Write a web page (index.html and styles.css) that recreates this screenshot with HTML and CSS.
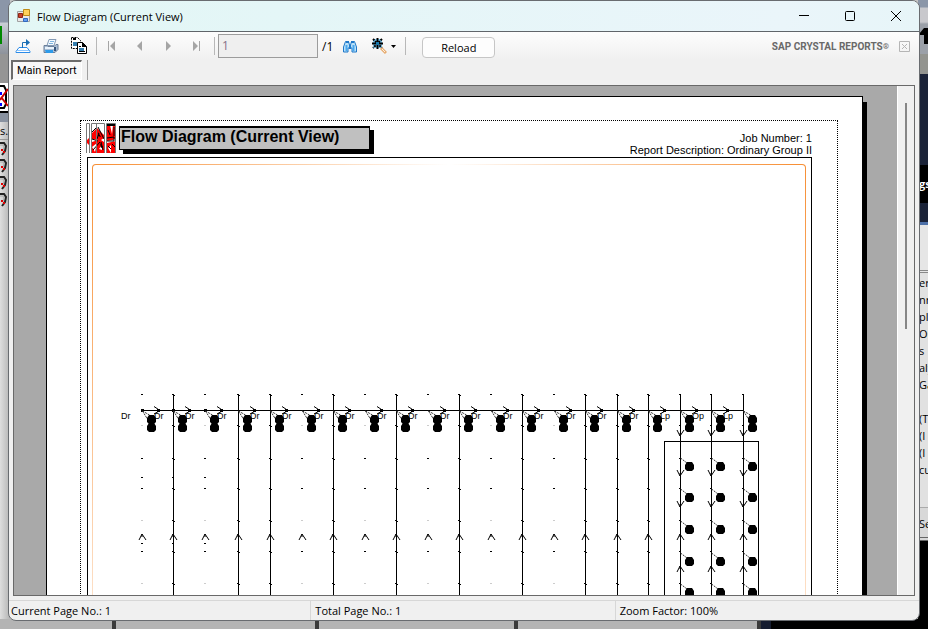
FILE: index.html
```html
<!DOCTYPE html>
<html lang="en">
<head>
<meta charset="utf-8">
<title>Flow Diagram (Current View)</title>
<link rel="stylesheet" href="styles.css">
</head>
<body>
<div class="desktop">
  <div class="edge-left">
    <div class="el-top"><i class="green"></i></div>
    <div class="el-gray"></div>
    <svg class="el-tool" width="9" height="30" viewBox="0 0 9 30" aria-hidden="true">
      <path fill="#fff" d="M0 0h9v30H0z"/><path stroke="#000" stroke-width="2" fill="none" d="M0 3h4l2 4v14l-2 4H0"/><path stroke="#c00" stroke-width="2" fill="none" d="M8 6L0 17M1 14l7 9"/><path fill="#00f" d="M0 9h2v3H0zM0 20h2v3H0z"/><path fill="#000" d="M0 28h9v2H0z"/>
    </svg>
    <div class="el-head"></div>
    <span class="el-text">s.</span>
    <svg class="el-hooks" width="9" height="72" viewBox="0 0 9 72" aria-hidden="true">
      <defs><g id="hook"><path fill="none" stroke="#222" stroke-width="2" d="M0 1h4l2 3-1 5-3 4"/><path fill="none" stroke="#aaa" d="M0 3h3l1 2-1 4"/><path stroke="#d00" stroke-width="2" d="M2 7v2M4 9v2"/></g></defs>
      <use href="#hook"/><use href="#hook" y="17"/><use href="#hook" y="34"/><use href="#hook" y="51"/>
    </svg>
  </div>
  <div class="edge-right">
    <div class="er-top"><svg width="9" height="20" viewBox="0 0 9 20" aria-hidden="true"><path d="M0 7l5-6h4v16H5V8H0z"/></svg></div>
    <div class="er-gray"></div>
    <div class="er-navy"></div>
    <div class="er-tag">gs</div>
    <div class="er-navy er-short"></div>
    <div class="er-pale"></div>
    <ul class="er-list"><li>er</li><li>nr</li><li>ple</li><li>Ou</li><li>s</li><li>aly</li><li>Ga</li><li></li><li>(T</li><li>(I</li><li>(I</li><li>cu</li></ul>
    <div class="er-foot">Se</div>
  </div>
  <div class="edge-bottom"><span></span><i></i><i></i><i></i><b></b></div>
</div>

<main class="window">
  <header class="titlebar">
    <svg class="app-icon" width="14" height="14" viewBox="0 0 14 14" aria-hidden="true">
      <path fill="#e8e8e8" stroke="#a0a0a0" d="M.5 2.500h12v10H.5z"/>
      <path fill="#c8402c" stroke="#8e2414" d="M1.500 4.500h4v4h-4z"/><path fill="#ffd15c" stroke="#bd8a16" d="M6.500.5h6v6h-6z"/><path fill="#629cf0" stroke="#3168bd" d="M6.500 9.500h4v3h-4z"/>
    </svg>
    <h1>Flow Diagram (Current View)</h1>
    <div class="win-buttons">
      <button type="button" aria-label="Minimize"><svg width="12" height="12" viewBox="0 0 12 12"><path d="M1 5.500h10"/></svg></button>
      <button type="button" aria-label="Maximize"><svg width="12" height="12" viewBox="0 0 12 12"><rect x="1.500" y="1.500" width="9" height="9" rx="1"/></svg></button>
      <button type="button" aria-label="Close"><svg width="12" height="12" viewBox="0 0 12 12"><path d="M1 1l10 10M11 1L1 11"/></svg></button>
    </div>
  </header>

  <div class="toolbar">
    <button type="button" class="tool" aria-label="Export"><svg width="16" height="16" viewBox="0 0 16 16"><path fill="#fff" stroke="#2b8be8" d="M4 9.500h8l3 4v1H1v-1z"/><path stroke="#8cc6ff" d="M2 12.500h12"/><path fill="none" stroke="#1c6fb4" d="M7.500 10V4.500H13"/><path fill="#1c6fb4" d="M11 1l4 3.500L11 8z"/></svg></button>
    <button type="button" class="tool" aria-label="Print"><svg width="16" height="16" viewBox="0 0 16 16"><path fill="#f4faff" stroke="#8399b4" d="M6 1.500h7l-2 6H4z"/><path stroke="#7fb4df" d="M7 3.500h4M6 5.500h4"/><path fill="#a9bdd4" stroke="#6b7f99" d="M1 7.500h3l1 1h6l2-2h2v5l-3 3H1z"/><path fill="#e9f3fc" d="M2 9h9v2H2z"/><path fill="#2d9bea" d="M2 12h8v3H3z"/><path fill="#35537a" d="M11 9h2v4h-2z"/></svg></button>
    <button type="button" class="tool" aria-label="Copy"><svg width="18" height="18" viewBox="0 0 18 18"><path fill="#fff" stroke="#000" stroke-dasharray="2 1" d="M1.500.5h6l3 3v8h-9z"/><path fill="#367fae" d="M3 5h4v4H3z"/><path fill="#fff" stroke="#000" d="M7.500 5.500h5l4 4v7h-9z"/><path fill="#000" d="M12 5l5 5h-5zM3 1h3v2H3z"/><path fill="#367fae" d="M9 11h5v4H9z"/><path stroke="#000" d="M9 9.500h2M9 14.500h6"/></svg></button>
    <span class="sep"></span>
    <button type="button" class="tool nav" aria-label="First page"><svg width="10" height="10" viewBox="0 0 10 10"><path d="M1 0h1v10H1zM8 0v10L3 5z"/></svg></button>
    <button type="button" class="tool nav" aria-label="Previous page"><svg width="10" height="10" viewBox="0 0 10 10"><path d="M7 0v10L2 5z"/></svg></button>
    <button type="button" class="tool nav" aria-label="Next page"><svg width="10" height="10" viewBox="0 0 10 10"><path d="M3 0v10l5-5z"/></svg></button>
    <button type="button" class="tool nav" aria-label="Last page"><svg width="10" height="10" viewBox="0 0 10 10"><path d="M8 0h1v10H8zM2 0v10l5-5z"/></svg></button>
    <span class="sep sep-wide"></span>
    <label class="page-no"><input type="text" value="1" aria-label="Page number" disabled><span>/1</span></label>
    <button type="button" class="tool" aria-label="Find"><svg width="14" height="13" viewBox="0 0 14 13"><path fill="#b9e0f8" stroke="#1f78c9" d="M.5 12V7l2-5.500h3L6.500 5h1l1-3.500h3l2 5.500v5H9V8H5v4z"/><path fill="#1f78c9" d="M3 1h3v2H3zM8 1h3v2H8zM6 5h2v4H6z"/><path stroke="#4aa8ee" stroke-width="2" d="M3.500 5v6M10.500 5v6"/></svg></button>
    <button type="button" class="tool zoom" aria-label="Zoom"><svg width="16" height="16" viewBox="0 0 16 16"><path fill="#7cc6ec" d="M2 1h9v9H2z"/><path stroke="#000" stroke-width="2" d="M1 5.500h11M6.500 0v11"/><path stroke="#000" stroke-dasharray="2 1" stroke-width="2" d="M2 1l9 9M11 1l-9 9"/><path fill="#1678ad" d="M5 4h3v3H5z"/><path stroke="#e7ad73" stroke-width="3" d="M10 10l5 5"/><path stroke="#fff0dc" d="M11 11l3 3"/></svg><svg width="5" height="3" viewBox="0 0 5 3"><path d="M0 0h5L2.500 3z"/></svg></button>
    <span class="sep"></span>
    <button type="button" class="reload">Reload</button>
    <span class="brand">SAP CRYSTAL REPORTS<small>®</small></span>
    <button type="button" class="close-view" aria-label="Close view"><svg width="11" height="11" viewBox="0 0 11 11"><path d="M.5.5h10v10H.5zM3 3l5 5M8 3L3 8"/></svg></button>
  </div>
  <nav class="tabs"><button type="button" class="tab">Main Report</button><span class="tab-sep"></span></nav>

  <section class="viewer">
    <div class="canvas">
      <article class="paper">
        <div class="margins">
          <div class="report-head">
            <svg class="logo" width="30" height="30" viewBox="0 0 30 30" aria-hidden="true">
              <path fill="#f00" d="M6 10l5-5 7 7v18H6zM21 1h9v29h-9zM1 17l2-2v7l-2-2z"/>
              <path fill="#fff" d="M12 5l2-3 4 1v8zM24 2h3l-1 9zM27 17l3-2v3l-9 2v-2zM6 16l6 1-6 2zM6 24l5-4-2 9zM22 25l3-3v8zM15 17l3-2v4zM13 26l3-4v5z"/>
              <path fill="none" stroke="#000" d="M6 9l5-5M12 4l6 12M6 16l6 2M7 27l7-8M15 19l2 8M13 10l-2 6M21 15l7-1v4h-7M22 7l2 5M22 23l3 3M28 4v9M26 21l4 4"/>
              <path fill="#000" d="M21 1h8v2h-8zM12 9l3 5-3-1zM14 20l3 4-2 1z"/>
              <path fill="none" stroke="#777" d="M.5 30V.5h3V30M5.500 30V.5h13V30M20.500 30V.5h9V30M10.500 0v30"/>
              <path fill="#fff" d="M4 0h1v30H4zM19 0h1v30h-1z"/>
            </svg>
            <h2>Flow Diagram (Current View)</h2>
            <p class="meta">Job Number: 1<br>Report Description: Ordinary Group II</p>
          </div>
          <div class="report-body">
            <div class="frame">
              <svg id="diagram" class="diagram" viewBox="93 165 712 900" width="712" height="900" role="img" aria-label="Flow diagram"></svg>
            </div>
          </div>
        </div>
      </article>
    </div>
    <div class="scrollbar"><span class="thumb"></span></div>
  </section>

  <footer class="status"><span>Current Page No.: 1</span><span>Total Page No.: 1</span><span>Zoom Factor: 100%</span></footer>
</main>
<script src="script.js"></script>
</body>
</html>
```
FILE: styles.css
```css
* { box-sizing: border-box; }
html, body { height: 100%; margin: 0; }
body { font-family: "Open Sans", sans-serif; font-size: 12px; color: #000; background: #c4c4c4; overflow: hidden; }
button { font: inherit; color: inherit; border: 0; background: none; padding: 0; }
h1, h2, p, ul { margin: 0; padding: 0; font-weight: normal; }

/* other windows showing around the edges */
.desktop { position: absolute; inset: 0; display: grid; grid-template-columns: 10px 1fr 10px; grid-template-rows: minmax(0, 1fr) 10px; }
.edge-left { background: linear-gradient(90deg, #dedede, #b4b4b4); display: flex; flex-direction: column; overflow: hidden; }
.el-top { height: 54px; padding-top: 26px; background: linear-gradient(#8b96a8 22px, #c9ced6 23px, #8d929b); flex: none; }
.green { display: block; width: 2px; height: 18px; background: #080; }
.el-gray { height: 29px; background: #959595; flex: none; }
.el-tool, .el-hooks { flex: none; }
.el-head { height: 9px; background: #8992a0; flex: none; }
.el-text { height: 18px; line-height: 18px; font-size: 11px; border-bottom: 1px solid #999; margin-bottom: 2px; flex: none; }
.edge-right { grid-column: 3; grid-row: 1; display: flex; flex-direction: column; overflow: hidden; background: #000; font-size: 11px; }
.edge-right > * { flex: none; padding-left: 1px; }
.edge-right > .er-top { height: 54px; padding-top: 27px; background: linear-gradient(#8b96a8 7px, #c8c8cc 8px 22px, #9ba0a8 24px); }
.er-gray { height: 20px; background: #93948f; }
.er-navy { height: 91px; background: #1b2338; }
.er-tag { height: 38px; line-height: 38px; background: #000; color: #fff; font-weight: bold; }
.er-short { height: 22px; border-bottom: 3px solid #4d70a8; }
.er-pale { height: 48px; background: #e6e6e6; border-bottom: 3px double #888; }
.er-list { height: 234px; padding-top: 1px; background: #e1e1e1; list-style: none; line-height: 17px; }
.er-list li { height: 17px; white-space: nowrap; }
.er-foot { height: 34px; line-height: 31px; background: #d8d8d8; border-top: 1px solid #aaa; border-bottom: 4px double #666; }
.edge-bottom { grid-column: 1 / -1; grid-row: 2; display: grid; grid-template-columns: 112px 203px 199px 243px 1fr; background: #b4b4b4; }
.edge-bottom i { border-left: 4px solid #3a3a3a; }
.edge-bottom b { background: #000; border-left: 4px solid #3a3a3a; box-shadow: inset 10px 0 #151c2f; }

.window { position: relative; height: calc(100% - 8px); margin: 0 8px; display: flex; flex-direction: column; background: #f0f0f0; border: 1px solid #696c70; border-radius: 8px; overflow: hidden; }
.titlebar { display: flex; align-items: center; height: 31px; flex: none; padding-left: 8px; background: linear-gradient(90deg, #e3f7f5, #e4f6f7 30%, #eaf5fa 85%, #e7f5f8); border-bottom: 1px solid #60656a; }
.titlebar h1 { font-size: 11px; margin-left: 6px; flex: 1; }
.win-buttons { display: flex; }
.win-buttons button { width: 46px; height: 28px; display: grid; place-items: center; }
.win-buttons svg { fill: none; stroke: #000; }

.toolbar { display: flex; align-items: center; height: 28px; flex: none; background: linear-gradient(#fdfdfd, #f0f0f0); }
.tool { width: 28px; height: 26px; display: flex; align-items: center; justify-content: center; }
.nav svg { fill: #a5a5a5; }
.sep { width: 1px; height: 18px; margin: 0 1px 0 3px; background: #b8b8b8; }
.sep-wide { margin: 0 3px 0 4px; }
.page-no { display: flex; align-items: center; gap: 4px; }
.page-no input { width: 100px; height: 24px; padding: 0 3px 2px; border: 1px solid #9c9c9c; background: #efefef; color: #86718a; font: 12px "Open Sans", sans-serif; }
.page-no + .tool { margin-left: 3px; }
.zoom { width: 38px; gap: 4px; }
.reload { width: 73px; height: 21px; margin: 3px 0 0 15px; border: 1px solid #c6c6c6; border-radius: 4px; background: #fdfdfd; font-size: 11px; line-height: 18px; }
.brand { margin-left: auto; font: bold 10px Roboto, sans-serif; color: #696969; }
.brand small { font-size: 8px; vertical-align: 1px; }
.close-view { margin: 0 9px 0 10px; height: 11px; display: flex; }
.close-view svg { fill: none; stroke: #b5b5b5; }

.tabs { display: flex; height: 25px; flex: none; padding-left: 2px; }
.tab { height: 20px; padding: 0 4px; font-family: Roboto, sans-serif; font-size: 11px; line-height: 18px; background: #f8f8f8; border: solid; border-width: 2px 1px 1px 2px; border-color: #6b6b6b #fff #fff #6b6b6b; }
.tab-sep { width: 1px; height: 20px; margin-left: 5px; background: #a0a0a0; }

.viewer { flex: 1; min-height: 0; display: flex; margin: 0 4px; border: 1px solid #696969; background: #a9a9a9; }
.canvas { flex: 1; min-width: 0; overflow: hidden; padding: 10px 2px 0 0; }
.paper { width: 817px; height: 1056px; margin: 0 auto; padding: 23px 24px 0 33px; background: #fff; border: 1px solid #000; box-shadow: 4px 6px #000; }
.margins { height: 960px; border: 1px dotted #000; padding: 2px 25px 0 5px; }
.report-head { display: flex; height: 34px; }
.logo { flex: none; }
.report-head h2 { width: 251px; height: 24px; margin: 3px 0 0 3px; padding-left: 1px; border: 1px solid #000; border-top-width: 2px; background: #c0c0c0; box-shadow: 4px 4px #000; font: bold 16px/18px "Liberation Sans", sans-serif; white-space: nowrap; }
.meta { flex: 1; padding-top: 9px; font: 11px/12px "Liberation Sans", sans-serif; text-align: right; white-space: nowrap; }
.report-body { margin-left: 1px; height: 900px; border: 1px solid #000; padding: 6px 5px 0 4px; }
.frame { height: 900px; border: 1px solid transparent; border-radius: 4px; background: linear-gradient(#fff, #fff) padding-box, linear-gradient(rgba(255, 255, 255, 0), #fff 600px) border-box, linear-gradient(90deg, #f78f35 8px, #fff 50%, #f78f35 calc(100% - 8px)) border-box; }
.diagram { display: block; }
.diagram text { font: 9px "Liberation Sans", sans-serif; }
.pipe { fill: none; stroke: #000; shape-rendering: crispEdges; }
.arrow { fill: none; stroke: #000; }
.link { fill: none; stroke: #333; stroke-dasharray: 2 1; }
.faint { fill: #ccc; }

.scrollbar { width: 17px; padding: 17px 0 0 7px; background: #f0f0f0; border-left: 1px solid #fff; }
.thumb { display: block; width: 2px; height: 46%; background: #868686; }
.status { display: flex; height: 24px; flex: none; padding-top: 4px; font-size: 11px; }
.status span { flex: 1; padding-left: 4px; line-height: 19px; border-top: 1px solid #d7d7d7; border-left: 1px solid #d7d7d7; }
.status span:first-child { padding-left: 2px; border-left: 0; }
```
FILE: script.js
```js
const svg = document.getElementById('diagram');
const out = [];
const columns = [142, 173, 205, 238, 270, 302, 333, 365, 396, 428, 459, 491, 522, 554, 585, 617, 648, 680, 711, 743];
const branchOnly = [142, 205, 302, 365, 428, 491, 554];
const bottom = 1065;

const path = (cls, d) => out.push(`<path class="${cls}" d="${d}"/>`);
const dot = (x, y, cls = '') => out.push(`<rect class="${cls}" x="${x}" y="${y}" width="2" height="1"/>`);
const head = (x, y) => out.push(`<path d="M${x - 2} ${y - 5}h5l2 3v4l-2 2h-5l-2-2v-4z"/>`);
const up = (x, y) => path('arrow', `M${x - 3} ${y + 6}L${x} ${y}L${x + 4} ${y + 6}M${x} ${y}v3`);
const down = (x, y) => path('arrow', `M${x - 3} ${y - 6}L${x} ${y}L${x + 4} ${y - 6}M${x} ${y}v-3`);

path('pipe', 'M142 410.5H744');
path('pipe', `M664.5 ${bottom}V441.5H758.5V${bottom}`);
out.push('<text x="121" y="419">Dr</text>');

columns.forEach((x, i) => {
  const c = x + 0.5;
  const single = branchOnly.includes(x);
  const last = i === columns.length - 1;
  if (!single) path('pipe', `M${c} 394V${bottom}`);
  [394, 425, 458, 488, 520, 551, 583].forEach((y, k) => {
    dot(x - 1, y, single && (k === 1 || k === 4 || k === 6) ? 'faint' : '');
    if (!single && x < 680) dot(x, y + 1);
  });
  if (i < 3) {
    dot(x - 1, 477);
    dot(x - 1, 543);
    out.push(`<rect x="${x - 1}" y="409" width="3" height="3"/>`);
  }
  if (!last) {
    path('arrow', `M${x + 12} 406.500L${x + 18} 410.500L${x + 12} 414`);
    out.push(`<rect x="${x + 15}" y="409" width="3" height="3"/>`);
    out.push(`<text x="${x + 12}" y="419">${i >= 16 ? (i === 17 ? 'Op' : 'Lp') : 'Dr'}</text>`);
  }
  path('link', `M${c} 411L${x + 6} 420M${c} 411L${x + 11} 417`);
  head(x + 9, 420);
  head(x + 9, 428);
  out.push(`<rect x="${x + 7}" y="421" width="5" height="5"/>`);
  if (x < 680) {
    up(x, 534);
  } else {
    [436, 476, 507].forEach(y => down(x, y));
    [534, 566].forEach(y => up(x, y));
    [467, 498, 530, 562, 593].forEach(y => {
      path('link', `M${c} ${y - 9}L${x + 7} ${y - 4}`);
      head(x + 9, y);
    });
  }
});
svg.innerHTML = out.join('');
```
